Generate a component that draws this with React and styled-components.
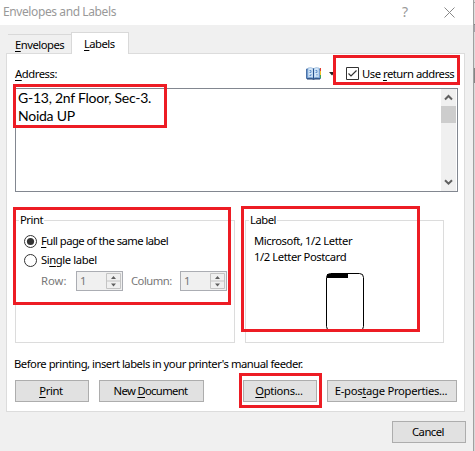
import React from "react";
import styled, { createGlobalStyle } from "styled-components";

const Global = createGlobalStyle`
  * { box-sizing: border-box; }
  html, body { margin: 0; padding: 0; overflow: hidden; background: #f0f0f0; }
  svg { flex: none; }
  u { text-decoration: underline; text-underline-offset: 2px; text-decoration-thickness: 1px; text-decoration-skip-ink: none; }
`;

const Screen = styled.div`
  position: relative;
  display: flex;
  width: 475px;
  height: 451px;
  overflow: hidden;
  background: #f0f0f0;
  color: #000;
  font: 11.25px/16px "Noto Sans", "Open Sans", sans-serif;
`;
const Dialog = styled.main`
  width: 473px;
  display: flex;
  flex-direction: column;
`;
const Backdrop = styled.div`
  width: 2px;
  border-left: 1px solid #a0a0a0;
  background: linear-gradient(#dedede 0 2px, #a5a5a5 2px 3px, #dedede 3px 24px, #858585 24px 25px, #a3a3ab 25px 32px, #dcdcdc 32px 68px, #858585 68px 83px, #d9d9d9 83px);
`;
const Text = styled.span`
  display: block;
  white-space: pre;
  letter-spacing: ${(p) => p.$ls || 0}px;
`;
const TitleBar = styled.header`
  height: 25px;
  flex: none;
  display: flex;
  align-items: center;
  padding: 0 18px 1px 3px;
  background: #fff;
  color: #999;
  font-size: 12px;
`;
const TitleActions = styled.div`
  margin-left: auto;
  display: flex;
  gap: 36px;
  align-items: center;
  font-size: 14px;
`;
const Tabs = styled.nav`
  height: 28px;
  flex: none;
  display: flex;
  align-items: flex-end;
  padding-left: 8px;
`;
const Tab = styled.div`
  position: relative;
  width: ${(p) => p.$w}px;
  height: ${(p) => (p.$active ? 22 : 19)}px;
  margin-bottom: ${(p) => (p.$active ? -1 : 0)}px;
  padding: ${(p) => (p.$active ? "3px 0 0 12px" : "2px 0 0 7px")};
  border: 1px solid #d9d9d9;
  border-bottom: 0;
  border-left-width: ${(p) => (p.$active ? 1 : 0)}px;
  border-right-width: ${(p) => (p.$active ? 1 : 0)}px;
  background: ${(p) => (p.$active ? "#fff" : "#f0f0f0")};
`;
const Page = styled.section`
  width: 459px;
  height: 359px;
  flex: none;
  margin-left: 6px;
  padding: 10px 7px 0 8px;
  border: 1px solid #dcdcdc;
  background: #fff;
`;
const AddressBar = styled.div`
  height: 24px;
  display: flex;
  align-items: center;
  padding-bottom: 5px;
`;
const BookMenu = styled.div`
  margin-left: auto;
  display: flex;
  width: 40px;
  align-items: center;
  gap: 1px;
`;
const Check = styled.label`
  display: flex;
  align-items: center;
  gap: 3px;
  width: 111px;
`;
const AddressBox = styled.div`
  display: flex;
  width: 443px;
  height: 104px;
  border: 1px solid #828790;
  background: #fff;
`;
const AddressText = styled.div`
  flex: 1;
  padding: 0 0 0 2px;
  font: 14px/18px Lato, "Open Sans", sans-serif;
`;
const Scrollbar = styled.div`
  width: 15px;
  margin-right: 1px;
  display: flex;
  flex-direction: column;
  align-items: center;
  background: #f0f0f0;
`;
const ScrollButton = styled.div`
  height: 17px;
  display: flex;
  align-items: center;
`;
const Thumb = styled.div`
  width: 15px;
  height: 17px;
  margin-bottom: auto;
  background: #cdcdcd;
`;
const Groups = styled.div`
  display: flex;
  gap: 10px;
  margin-top: 28px;
`;
const Group = styled.section`
  width: ${(p) => p.$w}px;
  height: 123px;
  border: 1px solid #dcdcdc;
`;
const Legend = styled.div`
  width: max-content;
  height: 16px;
  margin: -9px 0 0 3px;
  padding: 0 1px;
  background: #fff;
`;
const Choices = styled.div`
  display: flex;
  flex-direction: column;
  gap: 3px;
  padding: 5px 0 0 7px;
`;
const Choice = styled.label`
  display: flex;
  align-items: center;
  gap: 3px;
  height: 16px;
`;
const SpinRow = styled.div`
  display: flex;
  align-items: center;
  height: 20px;
  margin-top: 3px;
  padding-left: 25px;
  color: #777;
`;
const SpinLabel = styled.div`
  width: ${(p) => p.$w}px;
`;
const SpinBox = styled.div`
  display: flex;
  width: 47px;
  height: 20px;
  margin-right: ${(p) => p.$gap || 0}px;
  padding: 1px 1px 1px 3px;
  border: 1px solid #abadb3;
  background: #f0f0f0;
  justify-content: space-between;
`;
const LabelInfo = styled.div`
  display: flex;
  flex-direction: column;
  padding: 5px 0 0 8px;
`;
const LabelArt = styled.svg`
  display: block;
  margin: 8px 0 0 80px;
`;
const Hint = styled.div`
  margin-top: 13px;
  margin-left: -1px;
`;
const Buttons = styled.div`
  display: flex;
  margin-top: 8px;
`;
const Button = styled.button`
  width: ${(p) => p.$w}px;
  height: 22px;
  flex: none;
  display: flex;
  align-items: center;
  justify-content: center;
  margin: 0 ${(p) => p.$gap ?? 0}px 0 0;
  padding: 0 2px 0 0;
  border: 1px solid #adadad;
  background: #e1e1e1;
  color: #000;
  font: inherit;
`;
const Footer = styled.footer`
  display: flex;
  justify-content: flex-end;
  padding: 9px 7px 0 0;
`;
const Highlight = styled.div`
  position: absolute;
  left: ${(p) => p.$x}px;
  top: ${(p) => p.$y}px;
  width: ${(p) => p.$w}px;
  height: ${(p) => p.$h}px;
  border: 3px solid #ed1c24;
  pointer-events: none;
`;

const Radio = ({ checked }) => (
  <svg width="15" height="15" viewBox="0 0 15 15">
    <circle cx="7.5" cy="7.5" r="6" fill="#fff" stroke="#333" />
    {checked && <circle cx="7.5" cy="7.5" r="3.6" fill="#333" />}
  </svg>
);

const Chevron = ({ down }) => (
  <svg width="9" height="7" viewBox="0 0 9 7">
    <path d={down ? "M1 1.2 4.5 4.7 8 1.2" : "M1 5.5 4.5 2 8 5.5"} fill="none" stroke="#606060" strokeWidth="2" />
  </svg>
);

const Spinner = ({ gap }) => (
  <SpinBox $gap={gap}>
    <Text>1</Text>
    <svg width="15" height="16" viewBox="0 0 15 16">
      <path d="M.5.5h14v15H.5zM.5 8h14" fill="#f0f0f0" stroke="#c4c4c4" />
      <path d="M5 6h5L7.5 3zM5 10.5h5L7.5 13.5z" fill="#606060" />
    </svg>
  </SpinBox>
);

const Book = () => (
  <svg width="16" height="13" viewBox="0 0 16 13">
    <path d="M.5 2h14v9.500H9l-1.500 1-1.500-1H.5z" fill="#6f9bd0" stroke="#4a72a8" />
    <path d="M2 1q3-1 5.200.5v9.500Q5 9.500 2 10.500zM13 1q-3-1-5.200.5v9.500q2.200-1.500 5.200-.5z" fill="#d3e6f8" stroke="#85a9d2" strokeWidth=".6" />
    <path d="M3.500 3.500H5v2H3.500M5 7v1.500H3.500M9.500 3.500H11v2H9.500M11 7v1.500" fill="none" stroke="#5f8ec8" />
    <path d="M7.500 1.500v10" stroke="#25508c" />
    <path d="M1 12h13" stroke="#1f3f70" />
    <path d="M14 1h1v3h-1z" fill="#e33c2e" />
    <path d="M14 4h1v4h-1z" fill="#f3c52c" />
    <path d="M14 8h1v3h-1z" fill="#3fa34d" />
  </svg>
);

export default function App() {
  return (
    <Screen>
      <Global />
      <Dialog>
        <TitleBar>
          <Text $ls={-0.4}>Envelopes and Labels</Text>
          <TitleActions>
            <Text>?</Text>
            <svg width="11" height="11" viewBox="0 0 11 11">
              <path d="M.5.5l10 10M10.500.5l-10 10" stroke="#888" />
            </svg>
          </TitleActions>
        </TitleBar>
        <Tabs>
          <Tab $w={63}><Text $ls={-0.5}><u>E</u>nvelopes</Text></Tab>
          <Tab $w={58} $active><Text $ls={-0.55}><u>L</u>abels</Text></Tab>
        </Tabs>
        <Page>
          <AddressBar>
            <Text $ls={-0.45}><u>A</u>ddress:</Text>
            <BookMenu>
              <Book />
              <svg width="14" height="4" viewBox="0 0 14 4"><path d="M6 0h6L9 3.500z" fill="#222" /></svg>
            </BookMenu>
            <Check>
              <svg width="13" height="13" viewBox="0 0 13 13">
                <path d="M.5.5h12v12H.5z" fill="#fff" stroke="#333" />
                <path d="M2.500 6.500 5 9l5.500-5.500" fill="none" stroke="#333" strokeWidth="1.200" />
              </svg>
              <Text $ls={-0.48}>Use <u>r</u>eturn address</Text>
            </Check>
          </AddressBar>
          <AddressBox>
            <AddressText>
              <Text $ls={-0.25}>G-13, 2nf Floor, Sec-3.</Text>
              <Text $ls={-0.25}>Noida UP</Text>
            </AddressText>
            <Scrollbar>
              <ScrollButton><Chevron /></ScrollButton>
              <Thumb />
              <ScrollButton><Chevron down /></ScrollButton>
            </Scrollbar>
          </AddressBox>
          <Groups>
            <Group $w={220}>
              <Legend><Text $ls={-0.45}>Print</Text></Legend>
              <Choices>
                <Choice><Radio checked /><Text $ls={-0.54}><u>F</u>ull page of the same label</Text></Choice>
                <Choice><Radio /><Text $ls={-0.4}>Si<u>n</u>gle label</Text></Choice>
              </Choices>
              <SpinRow>
                <SpinLabel $w={35}><Text>Row:</Text></SpinLabel>
                <Spinner gap={8} />
                <SpinLabel $w={49}><Text $ls={-0.5}>Column:</Text></SpinLabel>
                <Spinner />
              </SpinRow>
            </Group>
            <Group $w={199}>
              <Legend><Text $ls={-0.5}>Label</Text></Legend>
              <LabelInfo>
                <Text $ls={-0.43}>Microsoft, 1/2 Letter</Text>
                <Text $ls={-0.43}>1/2 Letter Postcard</Text>
              </LabelInfo>
              <LabelArt width="38" height="58" viewBox="0 0 38 58">
                <rect x=".5" y=".5" width="37" height="57" rx="4" fill="#fff" stroke="#000" />
                <path d="M1 1h21v4H1z" />
              </LabelArt>
            </Group>
          </Groups>
          <Hint><Text $ls={-0.48}>Before printing, insert labels in your printer's manual feeder.</Text></Hint>
          <Buttons>
            <Button $w={74} $gap={10}><Text $ls={-0.35}><u>P</u>rint</Text></Button>
            <Button $w={105} $gap={39}><Text $ls={-0.65}>New <u>D</u>ocument</Text></Button>
            <Button $w={74} $gap={10}><Text $ls={-0.35}><u>O</u>ptions...</Text></Button>
            <Button $w={130}><Text $ls={-0.3}>E-pos<u>t</u>age Properties...</Text></Button>
          </Buttons>
        </Page>
        <Footer><Button $w={74}><Text $ls={-0.5}>Cancel</Text></Button></Footer>
      </Dialog>
      <Backdrop />
      <Highlight $x={13} $y={84} $w={154} $h={44} />
      <Highlight $x={333} $y={55} $w={127} $h={30} />
      <Highlight $x={13} $y={207} $w={218} $h={98} />
      <Highlight $x={241} $y={206} $w={179} $h={126} />
      <Highlight $x={239} $y={373} $w={83} $h={35} />
    </Screen>
  );
}
